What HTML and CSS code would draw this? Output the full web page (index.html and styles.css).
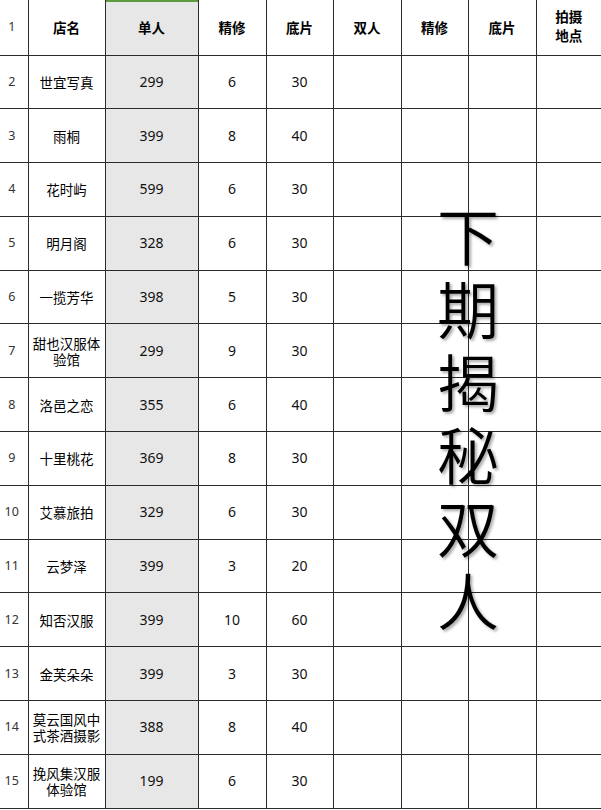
FILE: index.html
```html
<!DOCTYPE html>
<html lang="zh">
<head>
<meta charset="utf-8">
<link rel="stylesheet" href="styles.css">
</head>
<body>
<div class="sheet">
  <table class="grid">
    <colgroup>
      <col class="c-idx"><col class="c-name"><col class="c-single"><col class="c-a"><col class="c-b"><col class="c-a"><col class="c-b"><col class="c-a"><col class="c-loc">
    </colgroup>
    <thead>
      <tr class="head">
        <td class="idx">1</td>
        <th>店名</th>
        <th class="single sel">单人</th>
        <th>精修</th>
        <th>底片</th>
        <th>双人</th>
        <th>精修</th>
        <th>底片</th>
        <th class="loc">拍摄<br>地点</th>
      </tr>
    </thead>
    <tbody>
      <tr><td class="idx">2</td><td class="name">世宜写真</td><td class="single">299</td><td>6</td><td>30</td><td></td><td></td><td></td><td></td></tr>
      <tr><td class="idx">3</td><td class="name">雨桐</td><td class="single">399</td><td>8</td><td>40</td><td></td><td></td><td></td><td></td></tr>
      <tr><td class="idx">4</td><td class="name">花时屿</td><td class="single">599</td><td>6</td><td>30</td><td></td><td></td><td></td><td></td></tr>
      <tr><td class="idx">5</td><td class="name">明月阁</td><td class="single">328</td><td>6</td><td>30</td><td></td><td></td><td></td><td></td></tr>
      <tr><td class="idx">6</td><td class="name">一揽芳华</td><td class="single">398</td><td>5</td><td>30</td><td></td><td></td><td></td><td></td></tr>
      <tr><td class="idx">7</td><td class="name">甜也汉服体验馆</td><td class="single">299</td><td>9</td><td>30</td><td></td><td></td><td></td><td></td></tr>
      <tr><td class="idx">8</td><td class="name">洛邑之恋</td><td class="single">355</td><td>6</td><td>40</td><td></td><td></td><td></td><td></td></tr>
      <tr><td class="idx">9</td><td class="name">十里桃花</td><td class="single">369</td><td>8</td><td>30</td><td></td><td></td><td></td><td></td></tr>
      <tr><td class="idx">10</td><td class="name">艾慕旅拍</td><td class="single">329</td><td>6</td><td>30</td><td></td><td></td><td></td><td></td></tr>
      <tr><td class="idx">11</td><td class="name">云梦泽</td><td class="single">399</td><td>3</td><td>20</td><td></td><td></td><td></td><td></td></tr>
      <tr><td class="idx">12</td><td class="name">知否汉服</td><td class="single">399</td><td>10</td><td>60</td><td></td><td></td><td></td><td></td></tr>
      <tr><td class="idx">13</td><td class="name">金芙朵朵</td><td class="single">399</td><td>3</td><td>30</td><td></td><td></td><td></td><td></td></tr>
      <tr><td class="idx">14</td><td class="name">莫云国风中式茶酒摄影</td><td class="single">388</td><td>8</td><td>40</td><td></td><td></td><td></td><td></td></tr>
      <tr><td class="idx">15</td><td class="name">挽风集汉服体验馆</td><td class="single">199</td><td>6</td><td>30</td><td></td><td></td><td></td><td></td></tr>
    </tbody>
  </table>
  <div class="overlay">下期揭秘双人</div>
</div>
</body>
</html>
```
FILE: styles.css
```css
html, body {
  margin: 0;
  padding: 0;
  background: #ffffff;
}

.sheet {
  position: relative;
  width: 601px;
  height: 810px;
  overflow: hidden;
}

.grid {
  border-collapse: collapse;
  table-layout: fixed;
  width: 601px;
  font-family: "Noto Sans", "Noto Sans CJK SC", sans-serif;
  font-size: 14px;
  color: #111;
}

.c-idx { width: 28px; }
.c-name { width: 77px; }
.c-single { width: 93px; }
.c-a { width: 68px; }
.c-b { width: 67px; }
.c-loc { width: 65px; }

.grid td,
.grid th {
  border-right: 1px solid #2b2b2b;
  border-bottom: 1px solid #2b2b2b;
  padding: 0 2px;
  text-align: center;
  vertical-align: middle;
  line-height: 16px;
}

.grid td:last-child,
.grid th:last-child {
  border-right: none;
}

.head {
  height: 55px;
}

.grid tbody tr {
  height: 53.8px;
}

.grid th {
  font-family: "Noto Sans CJK SC", sans-serif;
  font-weight: 700;
  font-size: 13.5px;
  color: #000;
}

.grid th.loc {
  line-height: 19px;
  padding-bottom: 2px;
}

.grid .idx {
  font-size: 12.5px;
  color: #333;
  padding: 0 4px 0 0;
}

.grid .name {
  font-family: "Noto Sans CJK SC", sans-serif;
  font-size: 13.5px;
  color: #000;
}

.grid .single {
  background: #e7e7e7;
}

.grid .sel {
  box-shadow: inset 0 2px 0 #5c9a3c;
}

.overlay {
  position: absolute;
  left: 428px;
  top: 198px;
  width: 80px;
  font-family: "Noto Sans CJK SC", sans-serif;
  font-size: 62px;
  line-height: 73px;
  font-weight: 350;
  color: #000;
  text-align: center;
  word-break: break-all;
  text-shadow: 2px 2px 3px rgba(0, 0, 0, 0.35);
  pointer-events: none;
}
```
